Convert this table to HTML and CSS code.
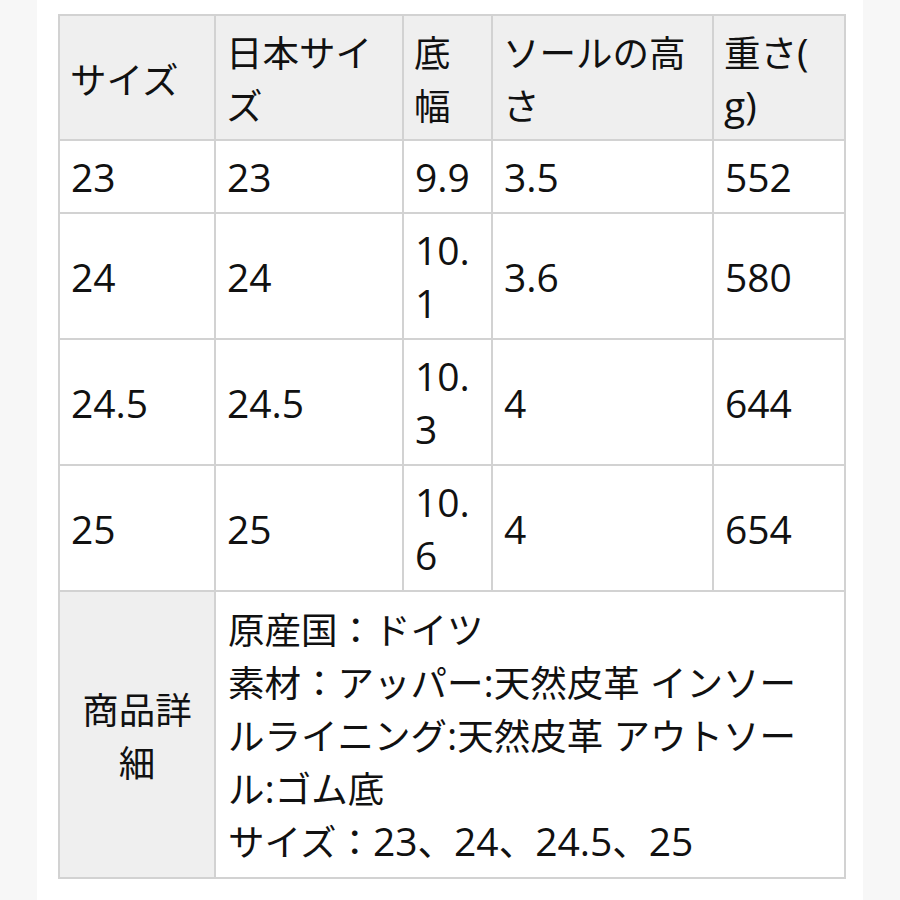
FILE: index.html
```html
<!DOCTYPE html>
<html lang="ja">
<head>
<meta charset="utf-8">
<link rel="stylesheet" href="styles.css">
</head>
<body>
<div class="panel">
<table class="spec">
<colgroup>
<col class="c1"><col class="c2"><col class="c3"><col class="c4"><col class="c5">
</colgroup>
<thead>
<tr><th>サイズ</th><th>日本サイズ</th><th>底幅</th><th>ソールの高さ</th><th>重さ<span class="lat">(</span><br><span class="lat">g)</span></th></tr>
</thead>
<tbody>
<tr><td class="n">23</td><td class="n">23</td><td class="n">9.9</td><td class="n">3.5</td><td class="n">552</td></tr>
<tr><td class="n">24</td><td class="n">24</td><td class="n">10.1</td><td class="n">3.6</td><td class="n">580</td></tr>
<tr><td class="n">24.5</td><td class="n">24.5</td><td class="n">10.3</td><td class="n">4</td><td class="n">644</td></tr>
<tr><td class="n">25</td><td class="n">25</td><td class="n">10.6</td><td class="n">4</td><td class="n">654</td></tr>
<tr><th class="label">商品詳細</th><td colspan="4" class="detail">原産国：ドイツ<br>素材：アッパー<span class="lat">:</span>天然皮革<span class="lat"> </span>インソールライニング<span class="lat">:</span>天然皮革<span class="lat"> </span>アウトソール<span class="lat">:</span>ゴム底<br>サイズ：<span class="lat">23</span>、<span class="lat">24</span>、<span class="lat">24.5</span>、<span class="lat">25</span></td></tr>
</tbody>
</table>
</div>
</body>
</html>
```
FILE: styles.css
```css
html, body {
  margin: 0;
  padding: 0;
  background: #f7f7f7;
}
.panel {
  background: #ffffff;
  margin: 0 37px;
  min-height: 900px;
  padding: 14px 21px 0 21px;
  box-sizing: border-box;
}
.spec {
  border-collapse: collapse;
  table-layout: fixed;
  width: 786px;
  font-family: "Noto Sans CJK JP", "Noto Sans", sans-serif;
  font-size: 36.5px;
  line-height: 53px;
  color: #111111;
}
.c1 { width: 156px; }
.c2 { width: 188px; }
.c3 { width: 89px; }
.c4 { width: 221px; }
.c5 { width: 132px; }
.spec th, .spec td {
  border: 2px solid #d2d2d2;
  padding: 9px 10px;
  text-align: left;
  vertical-align: middle;
  font-weight: normal;
  word-break: break-all;
}
.spec th {
  background: #efefef;
}
.spec thead th {
  padding-bottom: 8px;
}
.spec td.n, .lat {
  font-family: "Open Sans", "Noto Sans", sans-serif;
  font-size: 39px;
  line-height: 53px;
}
.spec td.n {
  padding-left: 11px;
}
.spec th.label {
  text-align: center;
  padding: 9px 18px;
}
.spec td.detail {
  padding: 10px 30px 10px 12px;
  line-break: anywhere;
}
```
